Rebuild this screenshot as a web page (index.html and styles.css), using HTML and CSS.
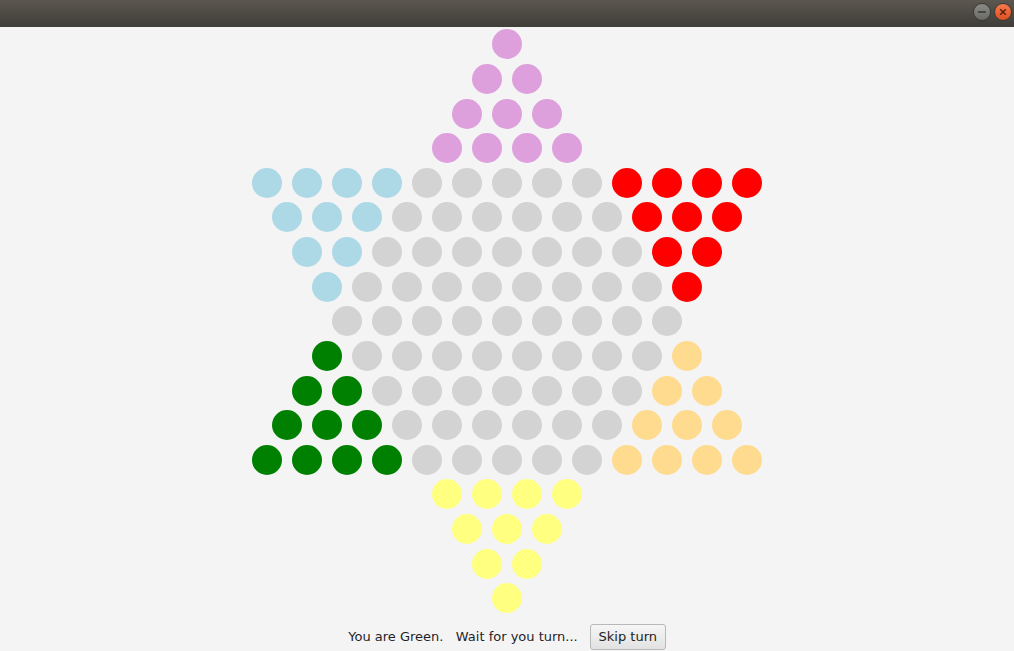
FILE: index.html
```html
<!DOCTYPE html>
<html>
<head>
<meta charset="utf-8">
<link rel="stylesheet" href="styles.css">
</head>
<body>
<div class="window">
  <div class="titlebar">
    <div class="tb-btn tb-min"><svg width="18" height="18" viewBox="0 0 18 18"><line x1="5" y1="9" x2="13" y2="9" stroke="#3a3a3a" stroke-width="1.6"/></svg></div>
    <div class="tb-btn tb-close"><svg width="18" height="18" viewBox="0 0 18 18"><path d="M6.2 6.2 L11.8 11.8 M11.8 6.2 L6.2 11.8" stroke="#5a2010" stroke-width="1.5" fill="none"/></svg></div>
  </div>
  <div class="board" id="board"></div>
  <div class="footer">
    <span class="status">You are Green.   Wait for you turn...</span>
    <button class="skip">Skip turn</button>
  </div>
</div>
<script>
var rows = [
  "P","PP","PPP","PPPP",
  "BBBBGGGGGRRRR","BBBGGGGGGRRR","BBGGGGGGGRR","BGGGGGGGGR",
  "GGGGGGGGG",
  "NGGGGGGGGO","NNGGGGGGGOO","NNNGGGGGGOOO","NNNNGGGGGOOOO",
  "YYYY","YYY","YY","Y"
];
var cls = {P:"plum",B:"blue",G:"gray",R:"red",N:"green",O:"orange",Y:"yellow"};
var board = document.getElementById("board");
rows.forEach(function(r){
  var row = document.createElement("div");
  row.className = "row";
  for (var i=0;i<r.length;i++){
    var c = document.createElement("div");
    c.className = "cell " + cls[r[i]];
    row.appendChild(c);
  }
  board.appendChild(row);
});
</script>
</body>
</html>
```
FILE: styles.css
```css
html, body {
  margin: 0;
  padding: 0;
  width: 1014px;
  height: 651px;
  overflow: hidden;
  background: #f4f4f4;
}
.window {
  display: flex;
  flex-direction: column;
  width: 1014px;
  height: 651px;
}
.titlebar {
  height: 27px;
  flex: none;
  background: linear-gradient(#5b5750, #3f3d38);
  display: flex;
  justify-content: flex-end;
  align-items: center;
  gap: 3px;
  padding-right: 2px;
  box-sizing: border-box;
}
.tb-btn {
  width: 18px;
  height: 18px;
  border-radius: 50%;
  box-sizing: border-box;
  display: flex;
  align-items: center;
  justify-content: center;
  margin-top: -3px;
}
.tb-min {
  background: linear-gradient(#8a8a86, #6a6a66);
  border: 1px solid #3a3935;
}
.tb-close {
  background: linear-gradient(#f57a4e, #e0501f);
  border: 1px solid #3a3935;
}
.tb-btn svg { display: block; margin: -1px; }
.board {
  display: flex;
  flex-direction: column;
  flex: none;
}
.row {
  height: 34.64px;
  display: flex;
  justify-content: center;
  align-items: center;
  gap: 10px;
}
.cell {
  width: 30px;
  height: 30px;
  border-radius: 50%;
  flex: none;
}
.plum { background: #dda0dd; }
.blue { background: #add8e6; }
.gray { background: #d3d3d3; }
.red { background: #ff0000; }
.green { background: #008000; }
.orange { background: #ffdb8f; }
.yellow { background: #ffff80; }
.footer {
  display: flex;
  justify-content: center;
  align-items: center;
  gap: 12px;
  padding-top: 8px;
  height: 26px;
}
.status {
  white-space: pre;
  font-family: "DejaVu Sans", sans-serif;
  font-size: 13px;
  color: #1f1f2a;
}
.skip {
  font-family: "DejaVu Sans", sans-serif;
  font-size: 13px;
  color: #222;
  height: 26px;
  width: 76px;
  padding: 0;
  border: 1px solid #b8b8b8;
  border-radius: 3px;
  background: linear-gradient(#f6f6f6, #e2e2e2);
}
```
